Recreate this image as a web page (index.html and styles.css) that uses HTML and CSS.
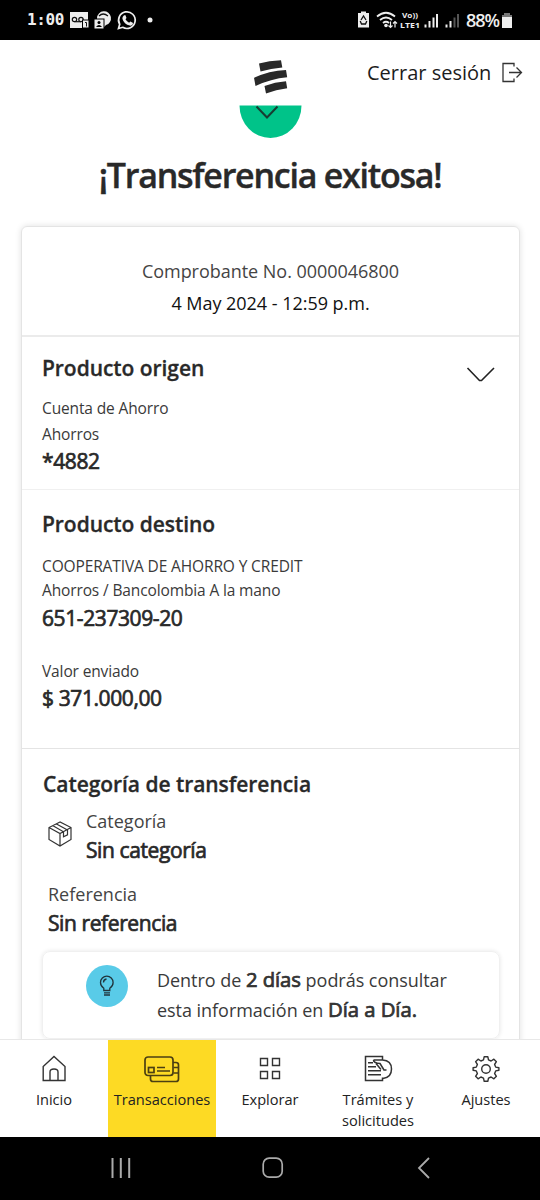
FILE: index.html
```html
<!DOCTYPE html>
<html lang="es">
<head>
<meta charset="utf-8">
<title>Transferencia exitosa</title>
<link rel="stylesheet" href="styles.css">
</head>
<body>
<div class="phone">
  <header class="status">
    <span class="clock">1:00</span>
    <svg class="status-left" width="90" height="24" viewBox="0 0 90 24">
      <path d="M2 4h18v9h-4v7H2z" fill="#eee"/>
      <g fill="none" stroke="#111" stroke-width="1.2"><circle cx="6.500" cy="11.500" r="2.200"/><circle cx="13" cy="11.500" r="2.200"/><path d="M6.500 13.700h6.500"/></g>
      <rect x="14.500" y="12" width="6.500" height="8" fill="#eee" stroke="#000"/><path d="M17 14.500h1.500v4" fill="none" stroke="#111"/>
      <path d="M29 10a7 7 0 1 1 9 7l-3 3v-8h-6z" fill="#eee"/><path d="M31 8q4-4 9 0" fill="none" stroke="#111" stroke-width="1.200"/>
      <rect x="26" y="11" width="10" height="10" fill="#eee" stroke="#000"/><circle cx="31" cy="14.500" r="1.500"/><path d="M28 19q3-4 6 0z"/>
      <path d="M50.500 20.500l1.200-4.200a8.300 8.300 0 1 1 3 3z" fill="none" stroke="#eee" stroke-width="1.700"/>
      <path d="M55.800 7.500l1.500-.4 1.200 3-1 1.200q1.300 2.600 3.600 3.400l1.300-1.300 2.700 1.600q-.3 3-3.200 2.600-6-1.300-7.500-6.800-.2-2 1.400-3.300z" fill="#eee"/>
      <circle cx="82" cy="12" r="2.500" fill="#eee"/>
    </svg>
    <svg class="status-right" width="109" height="24" viewBox="0 0 109 24">
      <path d="M1 5h3V3.500h5V5h3v14.500H1z" fill="#eee"/><path d="M4 12l2.500-4L9 12M9.800 13l-1.300 3H4.500l-1.300-3" fill="none" stroke="#111" stroke-width="1.300"/>
      <g fill="none" stroke="#eee" stroke-width="1.800"><path d="M20 8.500q9-7.500 18 0M23 12q6-5 12 0M26 15q3-2.500 6 0"/><path d="M33.500 13.500v6M31.500 17.500l2 2 2-2M38 19.500v-6M36 15.500l2-2 2 2" stroke-width="1.200"/></g>
      <circle cx="29" cy="17.500" r="1.800" fill="#eee"/>
      <g fill="#eee"><text class="tiny" x="45" y="9.500" textLength="16" lengthAdjust="spacingAndGlyphs">Vo))</text><text class="tiny" x="43" y="19.500" textLength="20" lengthAdjust="spacingAndGlyphs">LTE1</text>
      <path d="M67.500 16.500h2v3h-2zM71.500 13h2v6.500h-2zM75.500 9.500h2v10h-2zM79 6h2v13.500h-2zM88.500 16.500h2v3h-2zM92.500 13h2v6.500h-2z"/></g>
      <path d="M96.500 9.500h2v10h-2zM100 6h2v13.500h-2z" fill="#555"/>
    </svg>
    <span class="percent">88%</span>
    <svg width="12" height="18" viewBox="0 0 12 18"><path d="M3 2h6v2h2v3H1V4h2z" fill="#777"/><path d="M1 6h10v11H1z" fill="#eee"/></svg>
  </header>

  <main class="content">
    <div class="topbar">
      <svg class="brand" width="64" height="84" viewBox="0 0 64 84">
        <path d="M20 8.500Q30 5.800 42 5.300L43.300 12.500Q32 13.300 21.500 16.500zM15 22.800Q30 15.800 47 15L48.200 22.300Q32 23.800 16.500 31zM25.500 31Q36 27 47 26.200L48.200 33.200Q37 34.500 27 38.500z" fill="#292929"/>
        <path d="M.5 50.500h62a31 32.500 0 0 1-62 0z" fill="#00c389"/>
        <path d="M17.500 51.500l10.500 11L38.500 51.500" fill="none" stroke="#173d32" stroke-width="2"/>
      </svg>
      <a class="logout"><span>Cerrar sesión</span>
        <svg width="22" height="22" viewBox="0 0 22 22" fill="none" stroke="#333" stroke-width="1.300"><path d="M13 4.500V1.500H2v18h11v-3M8 10.500h12.500M15.500 5.500l5 5-5 5"/></svg>
      </a>
    </div>
    <h1 class="title">¡Transferencia exitosa!</h1>

    <section class="card">
      <div class="receipt">
        <p class="receipt-no">Comprobante No. 0000046800</p>
        <p class="receipt-date">4 May 2024 - 12:59 p.m.</p>
      </div>
      <div class="block origin">
        <div>
          <h2 class="heading">Producto origen</h2>
          <p class="small account">Cuenta de Ahorro</p>
          <p class="small kind">Ahorros</p>
          <p class="strong">*4882</p>
        </div>
        <svg class="chevron" width="30" height="18" viewBox="0 0 30 18" fill="none" stroke="#222" stroke-width="1.600"><path d="M1.500 2l12 12.500h2L28 2"/></svg>
      </div>
      <div class="block destination">
        <h2 class="heading">Producto destino</h2>
        <p class="small bank">COOPERATIVA DE AHORRO Y CREDIT</p>
        <p class="small bank-kind">Ahorros / Bancolombia A la mano</p>
        <p class="strong number">651-237309-20</p>
        <p class="small value-label">Valor enviado</p>
        <p class="strong amount">$ 371.000,00</p>
      </div>
      <div class="block category">
        <h2 class="heading">Categoría de transferencia</h2>
        <div class="category-row">
          <svg width="26" height="26" viewBox="0 0 26 26" fill="none" stroke="#333" stroke-width="1.200"><path d="M13 1L2 6.500v12L13 25l11-6.500v-12zM2 6.500l11 6 11-6M13 12.500V25M9.500 3l11 6M6 4.800l10.500 6v5l4-2V8.500"/></svg>
          <div><p class="label">Categoría</p><p class="strong">Sin categoría</p></div>
        </div>
        <div class="reference"><p class="label">Referencia</p><p class="strong">Sin referencia</p></div>
        <div class="notice">
          <span class="bulb"><svg width="18" height="24" viewBox="0 0 18 24" fill="none" stroke="#20343c" stroke-width="1.300"><path d="M5.800 16.500v-2.300Q2.500 12 2.500 8.400a6.300 6.300 0 0 1 12.600 0q0 3.600-3.300 5.800v2.300zM5.500 8.500q0-3 3-3.500M6 18.800h6M6 21h6"/></svg></span>
          <p class="notice-text">Dentro de <b>2 días</b> podrás consultar<br>esta información en <b>Día a Día.</b></p>
        </div>
      </div>
    </section>
  </main>

  <nav class="tabs">
    <a class="tab"><svg width="36" height="28" viewBox="0 0 36 28" fill="none" stroke="#333" stroke-width="1.400"><path d="M7.200 25.500V11.500L18 1.500l11 10v14zM14 25.500v-8.500q0-3 4-3t4 3v8.500"/></svg><span>Inicio</span></a>
    <a class="tab active"><svg width="36" height="28" viewBox="0 0 36 28" fill="none" stroke="#4b3f12" stroke-width="1.700"><rect x="1" y="2" width="28" height="18.500" rx="3"/><path d="M6.500 21v3q0 2.500 2.500 2.500h23q2.500 0 2.500-2.500V10q0-2.500-2.500-2.500h-3M29.500 12.500h5M29.500 18h5"/><rect x="4.500" y="12.500" width="5.500" height="5"/><path d="M13 12.500h8M13 16h13"/></svg><span>Transacciones</span></a>
    <a class="tab"><svg width="36" height="28" viewBox="0 0 36 28" fill="none" stroke="#333" stroke-width="1.400"><path d="M8.500 3.500h7v7h-7zM20.500 3.500h7v7h-7zM8.500 16.500h7v7h-7zM20.500 16.500h7v7h-7z"/></svg><span>Explorar</span></a>
    <a class="tab"><svg width="36" height="28" viewBox="0 0 36 28" fill="none" stroke="#333" stroke-width="1.500"><path d="M22.500 4.500V1.500h-17v24h17v-3M8 7.800h5M8 11.800h8M8 15.800h13M8 19.800h13M13.500 5h9q9 .5 9 9t-8.500 9.500h-1M13.500 5q0 3 6.500 3.500 2.500 4 4 6.500h2.500M16 8.500l5 6"/></svg><span>Trámites y<br>solicitudes</span></a>
    <a class="tab"><svg width="36" height="28" viewBox="0 0 36 28" fill="none" stroke="#333" stroke-width="1.400"><circle cx="18" cy="14" r="4.300"/><path stroke-linejoin="round" d="M16.200 1.700h3.600l.7 3.200 2.600 1.100 2.800-1.800 2.500 2.500-1.800 2.800 1.100 2.600 3.200.7v2.400l-3.200.7-1.100 2.600 1.800 2.800-2.500 2.500-2.800-1.800-2.600 1.100-.7 3.200h-3.600l-.7-3.200-2.600-1.100-2.800 1.800-2.500-2.500 1.800-2.800-1.100-2.600-3.200-.7v-2.400l3.200-.7 1.100-2.600-1.800-2.800 2.500-2.500 2.800 1.800 2.600-1.100z"/></svg><span>Ajustes</span></a>
  </nav>

  <footer class="system">
    <svg width="20" height="20" viewBox="0 0 20 20" stroke="#aaa" stroke-width="2"><path d="M1.500 0v20M9.800 0v20M18.200 0v20"/></svg>
    <svg class="home" width="22" height="22" viewBox="0 0 22 22" fill="none" stroke="#aaa" stroke-width="1.700"><rect x="1.200" y="1.200" width="19" height="19" rx="6"/></svg>
    <svg width="14" height="22" viewBox="0 0 14 22" fill="none" stroke="#aaa" stroke-width="1.800"><path d="M12 1L2 11l10 10"/></svg>
  </footer>
</div>
</body>
</html>
```
FILE: styles.css
```css
* { box-sizing: border-box; }
body { margin: 0; font-family: "Open Sans", sans-serif; color: #292929; background: #fff; }
h1, h2, p { margin: 0; }
svg { display: block; flex: none; }
.phone { width: 540px; height: 1200px; display: flex; flex-direction: column; overflow: hidden; white-space: nowrap; }

.status { height: 40px; flex: none; display: flex; align-items: center; background: #000; color: #eee; padding-left: 27px; }
.clock { width: 41px; font: bold 16px/40px "DejaVu Sans Mono", monospace; letter-spacing: -.4px; }
.status-right { margin-left: 199px; }
.percent { width: 35px; font-weight: 600; font-size: 18px; letter-spacing: -1px; }
.tiny { font: bold 7.5px "Open Sans", sans-serif; }

.content { height: 999px; flex: none; overflow: hidden; }
.topbar { height: 101px; padding-left: 239px; display: grid; grid-template-columns: 64px 1fr; }
.brand { margin-top: 15px; }
.logout { display: flex; justify-content: space-between; height: 30px; padding: 0 17px 0 64px; margin-top: 18px; font-size: 20px; line-height: 30px; align-items: center; color: #1c1c1c; }
.title { text-align: center; font-size: 34px; font-weight: 600; line-height: 68px; letter-spacing: -1.25px; height: 85px; -webkit-text-stroke: .4px #292929; }

.card { width: 499px; height: 900px; margin-left: 21px; border: 1px solid #e4e4e4; border-radius: 6px; box-shadow: 0 0 6px rgba(0,0,0,.12); }
.receipt { height: 110px; padding-top: 28px; text-align: center; border-bottom: 2px solid #ebebeb; font-size: 18px; line-height: 32px; letter-spacing: -.03px; }
.receipt-no { color: #444; }
.receipt-date { color: #111; }
.block { padding: 0 20px; }
.origin { height: 153px; padding-top: 15px; display: flex; justify-content: space-between; border-bottom: 1px solid #f0f0f0; }
.heading { font-size: 21px; line-height: 32px; font-weight: 600; -webkit-text-stroke: .3px #292929; letter-spacing: -.05px; }
.small { font-size: 15.5px; line-height: 24px; color: #3a3a3a; letter-spacing: -.13px; }
.account { margin-top: 12px; }
.kind { margin-top: 2px; }
.strong { font-size: 21px; line-height: 30px; font-weight: 400; -webkit-text-stroke: .7px #292929; letter-spacing: -.4px; }
.chevron { margin: 14px 3px 0 0; }
.destination { height: 259px; padding-top: 18px; border-bottom: 1px solid #e4e4e4; }
.bank { margin-top: 14px; }
.number { margin-top: 1px; }
.value-label { margin-top: 26px; }
.category { padding-top: 19px; }
.category .heading { padding-left: 1px; }
.category-row { display: flex; align-items: center; gap: 13px; padding-left: 5px; margin-top: 7px; }
.category-row svg { margin-top: -4px; }
.label { font-size: 18px; line-height: 28px; color: #444; }
.reference { margin: 15px 0 0 6px; }
.notice { width: 458px; height: 88px; margin-top: 13px; display: flex; border: 1px solid #f0f0f0; border-radius: 8px; box-shadow: 0 0 4px rgba(0,0,0,.1); padding: 13px 0 0 43px; }
.bulb { width: 42px; height: 42px; border-radius: 50%; background: #59cbe8; display: flex; align-items: center; justify-content: center; margin-right: 29px; }
.notice-text { font-size: 18px; line-height: 30px; color: #3a3a3a; letter-spacing: -.04px; }
.notice-text b { font-size: 20.3px; line-height: 1; font-weight: 400; -webkit-text-stroke: .7px #292929; }

.tabs { height: 98px; flex: none; display: grid; grid-template-columns: repeat(5, 108px); border-top: 1px solid #e8e8e8; background: #fff; }
.tab { display: flex; flex-direction: column; align-items: center; padding-top: 15px; font-size: 14.6px; line-height: 21px; text-align: center; color: #222; }
.tab span { margin-top: 6px; }
.active { background: #fdda24; }
.system { height: 63px; flex: none; background: #000; display: flex; align-items: center; justify-content: space-between; padding: 0 109px 2px 111px; }
.home { margin-right: 2px; }
```
